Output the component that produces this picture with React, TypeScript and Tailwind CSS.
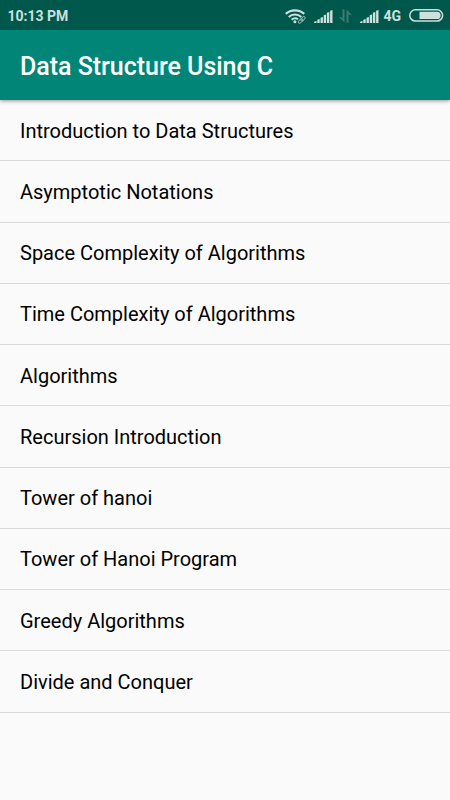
const TOPICS = [
	"Introduction to Data Structures",
	"Asymptotic Notations",
	"Space Complexity of Algorithms",
	"Time Complexity of Algorithms",
	"Algorithms",
	"Recursion Introduction",
	"Tower of hanoi",
	"Tower of Hanoi Program",
	"Greedy Algorithms",
	"Divide and Conquer",
];

const SIGNAL_BARS = [2, 4, 6, 8.5, 11, 13];

const WifiIcon = () => (
	<svg width="21" height="15" viewBox="0 0 21 15" fill="none" stroke="currentColor">
		<path d="M.8 4.900C5.800.1 14.200.1 19.200 4.900" strokeWidth="2.200" />
		<path d="M3.700 7.900c3.500-3.200 9.100-3.200 12.600 0" strokeWidth="2" />
		<path d="M6.600 10.700c2-1.800 4.600-1.800 6.400-.4" strokeWidth="1.900" />
		<circle cx="9.900" cy="12.800" r="1.500" fill="currentColor" stroke="none" />
		<g strokeWidth="1" opacity=".7">
			<rect x="-2.500" y="-1.300" width="5" height="2.600" rx="1.300" transform="translate(15.500 12) rotate(-48)" />
			<rect x="-2.500" y="-1.300" width="5" height="2.600" rx="1.300" transform="translate(18 9.800) rotate(-48)" />
		</g>
	</svg>
);

const SignalIcon = () => (
	<svg width="19" height="13" viewBox="0 0 19 13" fill="currentColor">
		{SIGNAL_BARS.map((height, index) => {
			const x = index * 3.2 + 0.1;
			// each bar is cut at a slope so the whole icon reads as a wedge
			return (
				<path
					key={height}
					d={`M${x} 13V${13.8 - height}L${x + 2.4} ${13 - height}V13z`}
				/>
			);
		})}
	</svg>
);

const DataArrowsIcon = () => (
	<svg width="13" height="14" viewBox="0 0 13 14" fill="currentColor">
		<path d="M3.500.3h2v13.300L0 8h2.200l1.300 1.500z" />
		<path d="M9.500 13.700h-2V.4L13 6h-2.200L9.500 4.500z" />
	</svg>
);

const BatteryIcon = () => (
	<svg width="35" height="13" viewBox="0 0 35 13">
		<rect x=".8" y=".8" width="32.800" height="11.200" rx="5.600" fill="none" stroke="currentColor" strokeWidth="1.500" />
		<path d="M10.500 2.800H28a3.600 3.600 0 0 1 0 7.200H10.500z" fill="currentColor" />
	</svg>
);

const StatusBar = () => (
	<div className="flex h-[30px] items-center bg-[#00574b] pt-[2px] pr-[6px] pl-[7.500px] text-[#cce0dd]">
		<span className="text-[14px] leading-4 font-bold">10:13 PM</span>
		<div className="ml-auto flex items-center">
			<WifiIcon />
			<span className="ml-[8px]"><SignalIcon /></span>
			<span className="ml-[6px] text-[#3c7d73]"><DataArrowsIcon /></span>
			<span className="ml-[8px]"><SignalIcon /></span>
			<span className="ml-[4px] text-[14px] leading-4 font-bold">4G</span>
			<span className="mb-[1px] ml-[8px]"><BatteryIcon /></span>
		</div>
	</div>
);

const App = () => {
	return (
		<div className="flex h-[800px] w-[450px] flex-col overflow-hidden bg-[#fafafa] font-['Roboto',sans-serif]">
			<header className="relative z-10 shadow-[0_1px_4px_rgba(0,0,0,0.4)]">
				<StatusBar />
				<div className="flex h-[70px] items-center bg-[#008577] px-5 pt-[3px]">
					<h1 className="text-[25px] leading-8 font-medium tracking-[-0.03px] text-white">
						Data Structure Using C
					</h1>
				</div>
			</header>

			<ul>
				{TOPICS.map((topic) => (
					<li
						key={topic}
						className="flex h-[61.250px] items-center border-b border-[#d9d9d9] px-5 pt-[1px] text-[20px] leading-6 text-black"
					>
						{topic}
					</li>
				))}
			</ul>
		</div>
	);
};

export default App;
